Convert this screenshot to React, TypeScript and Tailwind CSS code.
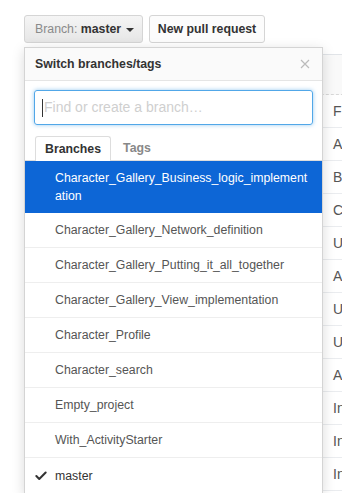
import { Check } from "lucide-react"

const branches = [
  "Character_Gallery_Network_definition",
  "Character_Gallery_Putting_it_all_together",
  "Character_Gallery_View_implementation",
  "Character_Profile",
  "Character_search",
  "Empty_project",
  "With_ActivityStarter",
]

// only the first letters of the commit messages show past the menu
const commits = ["F", "A", "B", "C", "U", "A", "U", "U", "A", "In", "In", "In"]

export default function App() {
  return (
    <div className="relative w-[342px] h-[493px] overflow-hidden bg-white font-['Liberation_Sans',Arial,sans-serif]">
      {/* page behind the menu */}
      <div className="flex pl-6 pt-[15px]">
        <button className="flex h-[28px] w-[119px] items-center rounded-[3px] border border-[#d5d5d5] bg-gradient-to-b from-[#f5f5f5] to-[#e6e6e6] pl-[10px] text-[12.3px] text-[#8a8a8a]">
          Branch:&nbsp;<span className="font-bold text-[#333]">master</span>
          <span className="ml-[5px] mt-[1px] h-0 w-0 border-x-[4px] border-t-[4px] border-x-transparent border-t-[#333]" />
        </button>
        <button className="ml-[6px] flex h-[28px] w-[116px] items-center justify-center rounded-[3px] border border-[#d5d5d5] bg-[#fcfcfc] text-[12.3px] font-bold text-[#333]">
          New pull request
        </button>
      </div>

      <div className="ml-6 mt-[11px] w-[330px] border-t border-[#e1e4e8] bg-[#f9f9f9]">
        <div className="h-[40px] border-b border-dashed border-[#d8d8d8]" />
        <div className="bg-white">
          {commits.map((c, i) => (
            <div key={i} className="flex h-[33px] items-center border-b border-[#eaecef] pl-[309px] text-[14px] text-[#555]">
              {c}
            </div>
          ))}
        </div>
      </div>

      {/* branch menu */}
      <div className="absolute left-6 top-[47px] w-[299px] border border-[#d4d4d4] bg-white shadow-[0_3px_12px_rgba(0,0,0,0.15)]">
        <div className="flex h-[33px] items-center justify-between border-b border-[#e5e5e5] bg-[#fafafa] px-[10px]">
          <span className="text-[12.3px] font-bold text-[#333]">Switch branches/tags</span>
          <svg width="10" height="10" viewBox="0 0 10 10" className="mr-[2px]">
            <path d="M1 1L9 9M9 1L1 9" stroke="#bbb" strokeWidth="1.2" />
          </svg>
        </div>
        <div className="px-[9px] pt-[9px]">
          <div className="flex h-[35px] items-center rounded-[3px] border border-[#51a7e8] pl-[7px] shadow-[0_0_4px_rgba(81,167,232,0.6)] text-[14px]">
            <span className="h-[18px] w-px bg-[#333]" />
            <span className="ml-px text-[#cfcfcf]">Find or create a branch…</span>
          </div>
        </div>
        <div className="mt-[11px] flex border-b border-[#ddd] pl-[10px] text-[12.3px] font-bold">
          <div className="-mb-px flex h-[25px] items-center rounded-t-[3px] border border-b-0 border-[#ddd] bg-white px-[9px] text-[#333]">
            Branches
          </div>
          <div className="flex h-[24px] items-center px-[12px] text-[#888]">Tags</div>
        </div>
        <div className="text-[12.3px] leading-[18px]">
          <div className="break-all bg-[#0d66d6] py-[8px] pl-[30px] pr-[10px] text-white">
            Character_Gallery_Business_logic_implementation
          </div>
          {branches.map((b) => (
            <div key={b} className="flex h-[35px] items-center border-b border-[#eee] pl-[30px] text-[#555]">
              {b}
            </div>
          ))}
          <div className="flex h-[35px] items-center pl-[9px] text-[#333]">
            <Check className="h-[14px] w-[14px]" strokeWidth={3.5} />
            <span className="ml-[7px]">master</span>
          </div>
        </div>
      </div>
    </div>
  )
}
